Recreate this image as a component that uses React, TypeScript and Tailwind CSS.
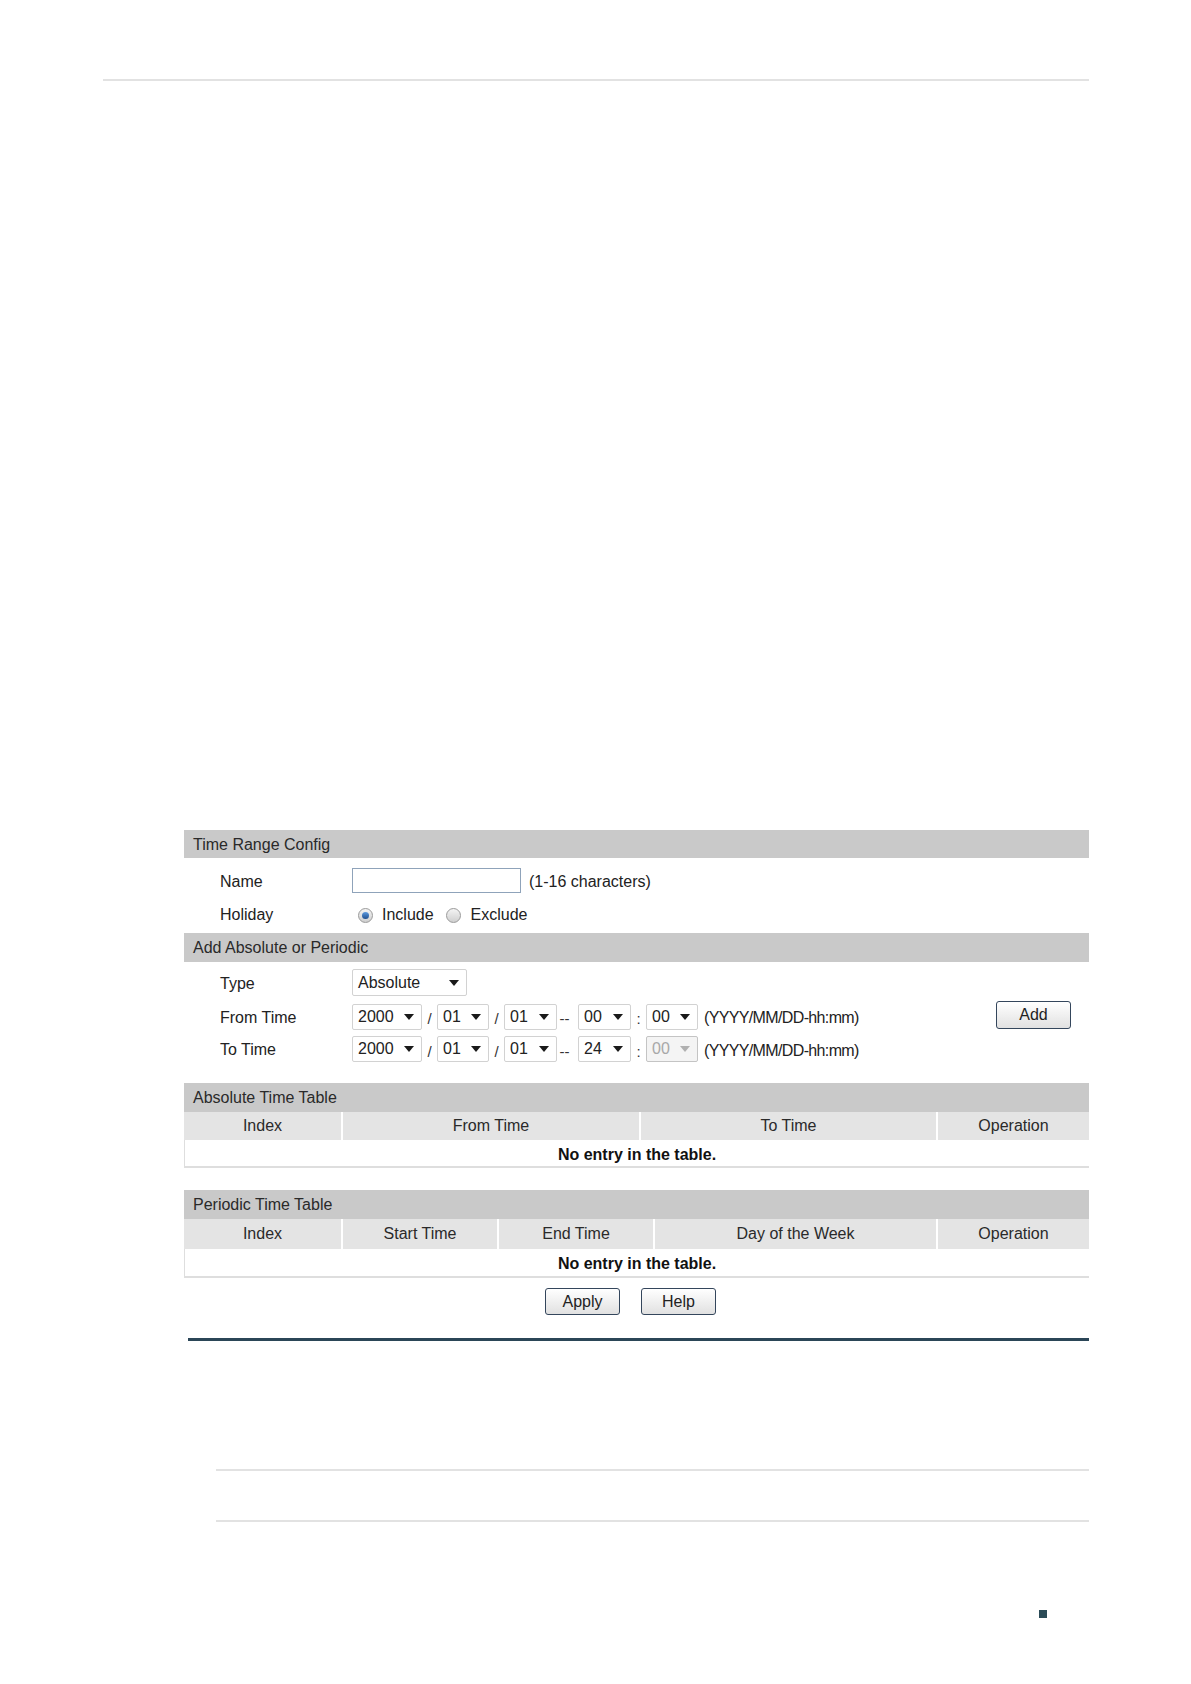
const FONT = "font-['Liberation_Sans',Arial,sans-serif]"

const Caret = ({ disabled }: { disabled?: boolean }) => (
    <svg width="10" height="6" viewBox="0 0 10 6" className="shrink-0">
        <path d="M0 0h10L5 6z" fill={disabled ? '#b0b0b0' : '#1a1a1a'} />
    </svg>
)

function Select({ value, width, disabled }: { value: string; width: string; disabled?: boolean }) {
    return (
        <div
            className={`flex h-[26px] items-center justify-between rounded-[2px] border pl-[5px] pr-[7px] text-[16px] ${width} ${
                disabled ? 'border-[#c4c4c4] bg-[#f4f4f4] text-[#a8a8a8]' : 'border-[#d2d2d2] bg-white text-[#222]'
            }`}
        >
            <span className="leading-none">{value}</span>
            <Caret disabled={disabled} />
        </div>
    )
}

const Sep = ({ children }: { children: string }) => (
    <span className="w-[15px] text-center text-[15px] text-[#333] leading-none pt-[4px]">{children}</span>
)

function Radio({ checked }: { checked?: boolean }) {
    return (
        <span className="flex h-[15px] w-[15px] items-center justify-center rounded-full border border-[#9a9a9a] bg-linear-to-b from-[#f4f4f4] to-[#cfcfcf]">
            {checked && <span className="h-[7px] w-[7px] rounded-full bg-linear-to-b from-[#5d9be0] to-[#1f4f8f]" />}
        </span>
    )
}

function Button({ label, className = '' }: { label: string; className?: string }) {
    return (
        <button
            className={`h-[27px] w-[75px] rounded-[3px] border border-[#34465c] bg-linear-to-b from-white to-[#e1e1e1] text-[16px] text-[#222] leading-none ${className}`}
        >
            {label}
        </button>
    )
}

const SectionHeader = ({ title, h }: { title: string; h: string }) => (
    <div className={`flex items-center bg-[#c9c9c9] pl-[9px] pt-[1px] text-[16px] text-[#2a2a2a] ${h}`}>{title}</div>
)

function TimeTable({ title, cols, colH, rowH }: { title: string; cols: [string, string][]; colH: string; rowH: string }) {
    return (
        <div>
            <SectionHeader title={title} h="h-[29px]" />
            <div className={`flex bg-[#e4e4e4] ${colH}`}>
                {cols.map(([name, w], i) => (
                    <div
                        key={name}
                        className={`flex items-center justify-center text-[16px] text-[#2a2a2a] ${w} ${i > 0 ? 'border-l-2 border-white' : ''}`}
                    >
                        {name}
                    </div>
                ))}
            </div>
            <div className={`flex items-center justify-center border-b-2 border-l border-[#dedede] bg-white pt-[3px] text-[16px] font-bold text-[#111] ${rowH}`}>
                No entry in the table.
            </div>
        </div>
    )
}

export default function App() {
    return (
        <div className={`min-h-[1684px] w-[1191px] bg-white ${FONT} text-[#222]`}>
            <div className="pt-[79px]">
                <div className="ml-[103px] h-[2px] w-[986px] bg-[#e2e2e2]" />
            </div>

            {/* config panel */}
            <div className="ml-[184px] mt-[749px] w-[905px]">
                <SectionHeader title="Time Range Config" h="h-[28px]" />

                <div className="mt-[10px] flex h-[25px] items-center pl-[36px] text-[16px]">
                    <span className="w-[132px] pt-[2px]">Name</span>
                    <div className="h-[25px] w-[169px] border border-[#8fa3ba] bg-white" />
                    <span className="ml-[8px] pt-[2px]">(1-16 characters)</span>
                </div>

                <div className="mt-[12px] mb-[8px] flex h-[20px] items-center pl-[36px] text-[16px]">
                    <span className="w-[138px]">Holiday</span>
                    <Radio checked />
                    <span className="ml-[9px]">Include</span>
                    <span className="ml-[12px]">
                        <Radio />
                    </span>
                    <span className="ml-[10px]">Exclude</span>
                </div>

                <SectionHeader title="Add Absolute or Periodic" h="h-[29px]" />

                <div className="mt-[7px] flex h-[27px] items-center pl-[36px] text-[16px]">
                    <span className="w-[132px] pt-[2px]">Type</span>
                    <Select value="Absolute" width="w-[115px] h-[27px]" />
                </div>

                <div className="mt-[8px] flex h-[25px] items-center pl-[36px] text-[16px]">
                    <span className="w-[132px] pt-[2px]">From Time</span>
                    <Select value="2000" width="w-[70px]" />
                    <Sep>/</Sep>
                    <Select value="01" width="w-[52px]" />
                    <Sep>/</Sep>
                    <Select value="01" width="w-[53px]" />
                    <Sep>--</Sep>
                    <span className="w-[6px]" />
                    <Select value="00" width="w-[53px]" />
                    <Sep>:</Sep>
                    <Select value="00" width="w-[52px]" />
                    <span className="ml-[6px] pt-[3px] tracking-[-0.04em]">(YYYY/MM/DD-hh:mm)</span>
                    <Button label="Add" className="ml-auto mr-[18px] self-start mt-[-3px] h-[28px] shrink-0" />
                </div>

                <div className="mt-[7px] flex h-[26px] items-center pl-[36px] text-[16px]">
                    <span className="w-[132px] pt-[2px]">To Time</span>
                    <Select value="2000" width="w-[70px]" />
                    <Sep>/</Sep>
                    <Select value="01" width="w-[52px]" />
                    <Sep>/</Sep>
                    <Select value="01" width="w-[53px]" />
                    <Sep>--</Sep>
                    <span className="w-[6px]" />
                    <Select value="24" width="w-[53px]" />
                    <Sep>:</Sep>
                    <Select value="00" width="w-[52px]" disabled />
                    <span className="ml-[6px] pt-[3px] tracking-[-0.04em]">(YYYY/MM/DD-hh:mm)</span>
                </div>

                <div className="mt-[21px]">
                    <TimeTable
                        title="Absolute Time Table"
                        colH="h-[28px]"
                        rowH="h-[28px]"
                        cols={[
                            ['Index', 'w-[157px]'],
                            ['From Time', 'w-[298px]'],
                            ['To Time', 'w-[297px]'],
                            ['Operation', 'w-[153px]'],
                        ]}
                    />
                </div>

                <div className="mt-[22px]">
                    <TimeTable
                        title="Periodic Time Table"
                        colH="h-[30px]"
                        rowH="h-[29px]"
                        cols={[
                            ['Index', 'w-[157px]'],
                            ['Start Time', 'w-[156px]'],
                            ['End Time', 'w-[156px]'],
                            ['Day of the Week', 'w-[283px]'],
                            ['Operation', 'w-[153px]'],
                        ]}
                    />
                </div>

                <div className="mt-[10px] flex gap-[21px] pl-[361px]">
                    <Button label="Apply" />
                    <Button label="Help" />
                </div>

                <div className="ml-[4px] mt-[23px] h-[3px] w-[901px] bg-[#2b4657]" />
            </div>

            <div className="ml-[216px] mt-[128px] h-[2px] w-[873px] bg-[#e2e2e2]" />
            <div className="ml-[216px] mt-[49px] h-[2px] w-[873px] bg-[#e2e2e2]" />

            <div className="ml-[1039px] mt-[88px] h-[8px] w-[8px] bg-[#2b4b57]" />
        </div>
    )
}
